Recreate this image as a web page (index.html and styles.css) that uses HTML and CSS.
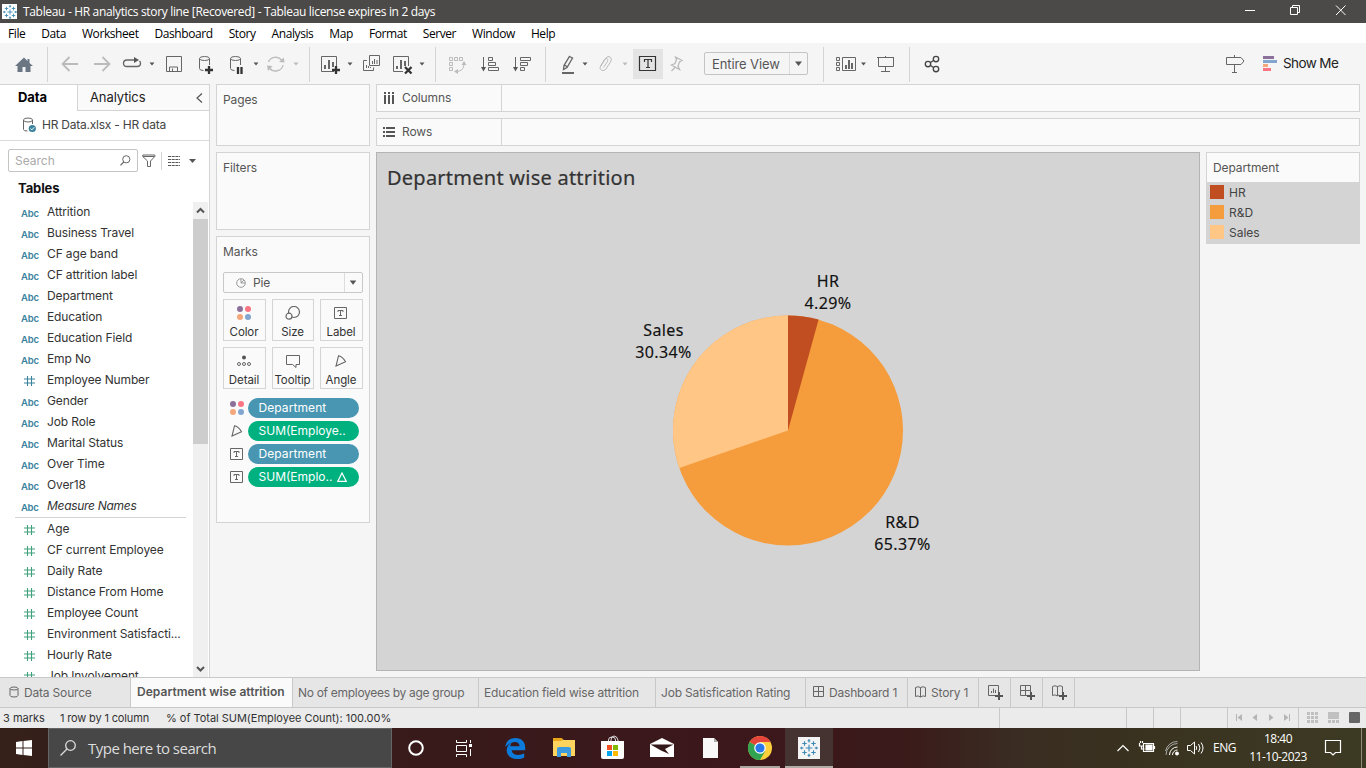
FILE: index.html
```html
<!DOCTYPE html>
<html lang="en">
<head>
<meta charset="utf-8">
<title>Tableau - HR analytics story line</title>
<link rel="stylesheet" href="styles.css">
</head>
<body>
<svg class="defs" width="0" height="0">
  <symbol id="abc" viewBox="0 0 18 14"><text x="0" y="11" class="abc-text">Abc</text></symbol>
  <symbol id="num" viewBox="0 0 18 14"><path d="M6.500 2v10M10.500 2v10M3 5h11M3 9h11" fill="none" stroke="currentColor" stroke-width="1.100"/></symbol>
  <symbol id="dots" viewBox="0 0 14 14"><circle cx="3" cy="3" r="3" fill="#8b7199"/><circle cx="11" cy="3" r="3" fill="#fa7583"/><circle cx="3" cy="11" r="3" fill="#f4a77b"/><circle cx="11" cy="11" r="3" fill="#82a6cf"/></symbol>
  <symbol id="label" viewBox="0 0 14 12"><path d="M.5.5h12v11h-12zM4 5V3.500h5V5M6.500 3.500v5M5 8.500h3" fill="none" stroke="#666"/></symbol>
  <symbol id="angle" viewBox="0 0 12 12"><path d="M3.500.8L1 11l9.500-4.200Q8 2 3.500.8z" fill="none" stroke="#666" stroke-width="1.100"/></symbol>
  <symbol id="tableau" viewBox="0 0 16 16"><path d="M8 5v6M5 8h6M8 0v3M6.800 1.500h2.400M8 13v3M6.800 14.500h2.400M0 8h3M1.500 6.800v2.400M13 8h3M14.500 6.800v2.400M4 2v4M2 4h4M12 2v4M10 4h4M4 10v4M2 12h4M12 10v4M10 12h4" fill="none" stroke="#3c8ab5"/></symbol>
</svg>

<header class="titlebar">
  <span class="app-icon"><svg width="14" height="14"><use href="#tableau"/></svg></span>
  <span class="title-text">Tableau - HR analytics story line [Recovered] - Tableau license expires in 2 days</span>
  <svg class="window-controls" width="136" height="23" viewBox="1230 0 136 23" fill="none" stroke="#fff"><path d="M1245 10.500h10M1290.500 7.500h7v7h-7zM1292.500 7V5.500h7v7H1298M1336 5.500l9.500 9.500M1345.500 5.500l-9.500 9.500"/></svg>
</header>

<nav class="menubar">
  <span>File</span><span>Data</span><span>Worksheet</span><span>Dashboard</span><span>Story</span><span>Analysis</span><span>Map</span><span>Format</span><span>Server</span><span>Window</span><span>Help</span>
</nav>

<div class="toolbar">
  <div class="tool-group">
    <svg width="47" height="40" viewBox="0 43 47 40"><path d="M15 66L24 57.500l3.500 3.500V59h2v4l3.500 3h-2.500v6h-5v-5h-3v5h-5v-6z" fill="#6b7683" stroke="none"/></svg>
  </div>
  <div class="tool-group">
    <svg class="muted" width="38" height="40" viewBox="48 43 38 40"><path class="thick" d="M78 64H63M69.500 57L62.500 64l7 7"/></svg>
    <svg class="muted" width="32" height="40" viewBox="86 43 32 40"><path class="thick" d="M94 64h15M102.500 57l7 7-7 7"/></svg>
    <svg width="42" height="40" viewBox="118 43 42 40"><path class="mid" d="M135 60h-8q-3.500 0-3.500 3.300t3.500 3.200h10q3.500 0 3.500-3.200 0-1.300-1-2.300"/><path class="fill" d="M134 57l5 3-5 3zM149.500 62.500h5l-2.500 3z"/></svg>
    <svg width="30" height="40" viewBox="160 43 30 40"><path d="M166.500 56.500h15v15h-15zM169.500 71v-4h8v4M172.500 71v-2.500"/></svg>
    <svg width="32" height="40" viewBox="190 43 32 40"><path d="M199.500 58.500v10q0 2 4 2M209.500 58.500V65M199.500 58.500q0-2 5-2t5 2-5 2-5-2"/><path class="bold" d="M209 66v8M205 70h8"/></svg>
    <svg width="40" height="40" viewBox="222 43 40 40"><path d="M230.500 58.500v10q0 2 4 2M240.500 58.500V65M230.500 58.500q0-2 5-2t5 2-5 2-5-2"/><path class="bold" d="M238 67v7M241.500 67v7"/><path class="fill" d="M253.500 62.500h5l-2.500 3z"/></svg>
    <svg class="muted" width="47" height="40" viewBox="262 43 47 40"><path class="mid" d="M268.500 62a7.500 7 0 0 1 13-2M283 65a7.500 7 0 0 1-13.500 3"/><path class="fill" d="M279 62l5.500.5-.8-5zM272.500 66l-5.500-.5 1 5.500zM293.500 62.500h5l-2.500 3z"/></svg>
  </div>
  <div class="tool-group">
    <svg width="47" height="40" viewBox="310 43 47 40"><path d="M334 71.500h-12.500v-15h15V66"/><path class="bars" d="M325 69v-4M329 69v-9M333 67v-5"/><path class="bold" d="M336 66v8M332 70h8"/><path class="fill" d="M347.500 62.500h5l-2.500 3z"/></svg>
    <svg width="30" height="40" viewBox="357 43 30 40"><path d="M369.500 55.500h10v10h-10zM367 60.500h-3.500v10h10v-3M372.500 64v-3M374.500 64v-5M377 64v-4M366.500 68v-3M368.500 68v-2M370.500 68v-1"/></svg>
    <svg width="48" height="40" viewBox="387 43 48 40"><path d="M403 71.500h-9.500v-15h15V66"/><path class="bars" d="M397 69v-3M401 69v-9M405 66v-5"/><path class="bold" d="M405 67l6.500 6.500M411.500 67l-6.500 6.500"/><path class="fill" d="M419.500 62.500h5l-2.500 3z"/></svg>
  </div>
  <div class="tool-group">
    <svg class="muted" width="37" height="40" viewBox="436 43 37 40"><path d="M449.500 57.500h3v3h-3zM454.500 57.500h3v3h-3zM459.500 57.500h3v3h-3zM449.500 62.500h3v3h-3zM449.500 67.500h3v3h-3zM464 64q0 7.500-8 7.500"/><path class="fill" d="M464 61l2.500 4h-5zM454 71.500l4-2.500v5z"/></svg>
    <svg width="33" height="40" viewBox="473 43 33 40"><path d="M483.500 57v13M488.500 57.500h4v3h-4zM488.500 62.500h7v3h-7zM488.500 67.500h10v3h-10z"/><path class="fill" d="M481 67h5l-2.500 4.500z"/></svg>
    <svg width="39" height="40" viewBox="506 43 39 40"><path d="M515.500 57v13M520.500 57.500h10v3h-10zM520.500 62.500h7v3h-7zM520.500 67.500h4v3h-4z"/><path class="fill" d="M513 67h5l-2.500 4.500z"/></svg>
  </div>
  <div class="tool-group">
    <svg width="46" height="40" viewBox="546 43 46 40"><path class="mid" d="M569.500 56.500l3 1.500-5.500 9.500-3.500 2 .5-4zM564.500 65l3 2"/><path class="bars" d="M562 73h12"/><path class="fill" d="M582.500 62.500h5l-2.500 3z"/></svg>
    <svg class="muted" width="41" height="40" viewBox="592 43 41 40"><path d="M601 66l5-8q2-2.500 4-1 2 1.500 1 4l-5 8q-2 2.500-4.500 1.200-2.500-1.700-1-4.200l4-6.500q1.200-1.700 2.500-1 1.500 1 .5 3l-4 6"/><path class="fill" d="M622.500 62.500h5l-2.500 3z"/></svg>
    <span class="pressed"><svg width="30" height="30" viewBox="633 49 30 30"><path d="M639.500 56.500h16v14h-16zM644.500 62v-2.500h7V62M648 59.500v8M646 67.500h4"/></svg></span>
    <svg class="muted" width="41" height="40" viewBox="663 43 41 40"><path class="mid" d="M675.500 57l6.500 3.500-2.500 1.500-1.500 4 1.500 3.500-8-4.500 3.500-1.500 1.500-4zM675 67.500L671.500 71"/></svg>
    <div class="combo"><span class="combo-text">Entire View</span><svg width="17" height="21" viewBox="0 0 17 21"><path class="fill" d="M5 8.500h7l-3.500 4.500z"/></svg></div>
    <span class="combo-tail"></span>
  </div>
  <div class="tool-group">
    <svg width="47" height="40" viewBox="824 43 47 40"><path d="M836.500 57.500h3v3h-3zM836.500 62.500h3v3h-3zM836.500 67.500h3v3h-3zM842.500 57.500h13v13h-13z"/><path class="bars" d="M846 69v-4M849 69v-9M852 69v-6"/><path class="fill" d="M861 62.500h5l-2.500 3z"/></svg>
    <svg width="38" height="40" viewBox="871 43 38 40"><path d="M877 57.500h17M878.500 58v8.500h15V58M885.500 56v2M885.500 67v4.500M881 71.500h9"/></svg>
  </div>
  <div class="tool-group">
    <svg class="share" width="44" height="40" viewBox="910 43 44 40"><circle cx="928" cy="64" r="2.700"/><circle cx="936" cy="59" r="2.700"/><circle cx="936" cy="69" r="2.700"/><path d="M930.500 62.500l3-2M930.500 65.500l3 2"/></svg>
  </div>
  <div class="tool-group right">
    <svg width="43" height="40" viewBox="1220 43 43 40"><path d="M1226.500 57.500h14.500l3 3.500-3 3.500h-14.500zM1234.500 55v2M1234.500 65v7M1232 72.500h5"/></svg>
    <svg width="20" height="40" viewBox="1263 43 20 40"><path d="M1263 56h11v3h-11z" fill="#8b7199" stroke="none"/><path d="M1263 60h14v3h-14z" fill="#82a6cf" stroke="none"/><path d="M1263 64h5v3h-5z" fill="#f4a77b" stroke="none"/><path d="M1263 68h8v3h-8z" fill="#fa7583" stroke="none"/></svg>
    <span class="showme">Show Me</span>
  </div>
</div>

<main class="workspace">
  <aside class="datapane">
    <div class="pane-tabs"><span class="pane-tab active">Data</span><span class="pane-tab other">Analytics<svg width="8" height="12" viewBox="0 0 8 12"><path d="M7 1.500L2 6l5 4.500" fill="none" stroke="#555" stroke-width="1.200"/></svg></span></div>
    <div class="source"><svg width="14" height="16" viewBox="0 0 14 16"><path d="M1.500 3v9.500q0 1.500 4 1.500M10.500 3v4M1.500 3q0-2 4.500-2t4.500 2T6 5 1.500 3" fill="none" stroke="#666"/><circle cx="10.300" cy="11.500" r="3.600" fill="#3b829d"/><path d="M8.500 11.500l1.400 1.400 2.300-2.600" fill="none" stroke="#fff"/></svg><span>HR Data.xlsx - HR data</span></div>
    <div class="search-row">
      <div class="search"><span>Search</span><svg width="11" height="11" viewBox="0 0 11 11"><circle cx="6.300" cy="4.300" r="3.600" fill="none" stroke="#666"/><path d="M3.700 7L.5 10.300" stroke="#666" stroke-width="1.200"/></svg></div>
      <svg width="14" height="14" viewBox="0 0 14 14"><path d="M.8 1h12v1.500L8.500 7v5.500h-3V7L.8 2.500zM1 2.500h11.500" fill="none" stroke="#666"/></svg>
      <i class="vline"></i>
      <svg class="view-icon" width="12" height="10" viewBox="0 0 12 10"><path d="M0 .5h12M0 3.500h12M0 6.500h12M0 9.500h12" stroke="#555" stroke-dasharray="3 .7"/></svg>
      <svg class="view-caret" width="7" height="4" viewBox="0 0 7 4"><path d="M0 0h7L3.500 4z" fill="#555"/></svg>
    </div>
    <h2 class="tables">Tables</h2>
    <div class="field-area">
      <div class="fields">
        <div class="field dim"><svg><use href="#abc"/></svg>Attrition</div>
        <div class="field dim"><svg><use href="#abc"/></svg>Business Travel</div>
        <div class="field dim"><svg><use href="#abc"/></svg>CF age band</div>
        <div class="field dim"><svg><use href="#abc"/></svg>CF attrition label</div>
        <div class="field dim"><svg><use href="#abc"/></svg>Department</div>
        <div class="field dim"><svg><use href="#abc"/></svg>Education</div>
        <div class="field dim"><svg><use href="#abc"/></svg>Education Field</div>
        <div class="field dim"><svg><use href="#abc"/></svg>Emp No</div>
        <div class="field dim"><svg><use href="#num"/></svg>Employee Number</div>
        <div class="field dim"><svg><use href="#abc"/></svg>Gender</div>
        <div class="field dim"><svg><use href="#abc"/></svg>Job Role</div>
        <div class="field dim"><svg><use href="#abc"/></svg>Marital Status</div>
        <div class="field dim"><svg><use href="#abc"/></svg>Over Time</div>
        <div class="field dim"><svg><use href="#abc"/></svg>Over18</div>
        <div class="field dim italic"><svg><use href="#abc"/></svg>Measure Names</div>
        <div class="split"></div>
        <div class="field mea"><svg><use href="#num"/></svg>Age</div>
        <div class="field mea"><svg><use href="#num"/></svg>CF current Employee</div>
        <div class="field mea"><svg><use href="#num"/></svg>Daily Rate</div>
        <div class="field mea"><svg><use href="#num"/></svg>Distance From Home</div>
        <div class="field mea"><svg><use href="#num"/></svg>Employee Count</div>
        <div class="field mea"><svg><use href="#num"/></svg>Environment Satisfacti...</div>
        <div class="field mea"><svg><use href="#num"/></svg>Hourly Rate</div>
        <div class="field mea"><svg><use href="#num"/></svg>Job Involvement</div>
      </div>
      <div class="scrollbar">
        <svg width="15" height="17" viewBox="0 0 15 17"><path d="M4 10.500L7.500 7l3.500 3.500" fill="none" stroke="#555" stroke-width="2"/></svg>
        <div class="thumb"></div>
        <svg width="15" height="17" viewBox="0 0 15 17"><path d="M4 7l3.500 3.500L11 7" fill="none" stroke="#555" stroke-width="2"/></svg>
      </div>
    </div>
  </aside>

  <section class="cards">
    <div class="card pages">Pages</div>
    <div class="card filters">Filters</div>
    <div class="card marks">
      <div class="marks-title">Marks</div>
      <div class="mark-type"><svg width="10" height="10" viewBox="0 0 10 10"><circle cx="5" cy="5" r="4.300" fill="none" stroke="#999"/><path d="M5 1v4h4M5 5l3-3" fill="none" stroke="#999"/></svg><span>Pie</span><svg class="mark-caret" width="18" height="19" viewBox="0 0 18 19"><path d="M5 7.500h7L8.500 12z" fill="#555"/></svg></div>
      <div class="mark-grid">
        <div class="mark-button"><svg width="14" height="14"><use href="#dots"/></svg>Color</div>
        <div class="mark-button"><svg width="16" height="14" viewBox="0 0 16 14" fill="none" stroke="#666" stroke-width="1.200"><circle cx="9" cy="6" r="5.500"/><circle cx="4" cy="10.200" r="3" fill="#fafafa"/></svg>Size</div>
        <div class="mark-button"><svg width="14" height="12"><use href="#label"/></svg>Label</div>
        <div class="mark-button"><svg width="14" height="12" viewBox="0 0 14 12" fill="none" stroke="#666"><circle cx="7" cy="2.500" r="2" fill="#555" stroke="none"/><circle cx="2" cy="9" r="1.500"/><circle cx="7" cy="9" r="1.500"/><circle cx="12" cy="9" r="1.500"/></svg>Detail</div>
        <div class="mark-button"><svg width="14" height="13" viewBox="0 0 14 13"><path d="M.5.5h13v9H10v3l-3.500-3h-6z" fill="none" stroke="#666"/></svg>Tooltip</div>
        <div class="mark-button"><svg width="12" height="12"><use href="#angle"/></svg>Angle</div>
      </div>
      <div class="pills">
        <div class="pill-row"><svg width="14" height="14"><use href="#dots"/></svg><span class="pill blue">Department</span></div>
        <div class="pill-row"><svg width="14" height="12"><use href="#angle"/></svg><span class="pill green">SUM(Employe..</span></div>
        <div class="pill-row"><svg width="14" height="12"><use href="#label"/></svg><span class="pill blue">Department</span></div>
        <div class="pill-row"><svg width="14" height="12"><use href="#label"/></svg><span class="pill green">SUM(Emplo..<svg width="10" height="10" viewBox="0 0 10 10"><path d="M5 1L.8 9.300h8.400z" fill="none" stroke="#fff" stroke-width="1.200"/></svg></span></div>
      </div>
    </div>
  </section>

  <section class="sheet">
    <div class="shelf"><span class="shelf-label"><svg width="12" height="12" viewBox="0 0 12 12"><path d="M2 0v2M2 3v9M6 0v2M6 3v9M10 0v2M10 3v9" stroke="#555" stroke-width="2"/></svg>Columns</span></div>
    <div class="shelf"><span class="shelf-label"><svg width="12" height="12" viewBox="0 0 12 12"><path d="M0 2h2M3 2h9M0 6h2M3 6h9M0 10h2M3 10h9" stroke="#555" stroke-width="2"/></svg>Rows</span></div>
    <div class="sheet-body">
      <div class="canvas">
        <h1 class="viz-title">Department wise attrition</h1>
        <svg class="pie" width="823" height="400" viewBox="377 230 823 400">
          <circle cx="788" cy="430.500" r="115" fill="#f59c3c"/>
          <path d="M788 430.500V315.500A115 115 0 0 1 818.600 319.600z" fill="#c14e20"/>
          <path d="M788 430.500L679.300 468A115 115 0 0 1 788 315.500z" fill="#ffc685"/>
          <g class="pie-labels"><text x="828" y="287">HR</text><text x="828" y="309">4.29%</text><text x="663.500" y="336">Sales</text><text x="663.500" y="358">30.34%</text><text x="902.500" y="528">R&amp;D</text><text x="902.500" y="550">65.37%</text></g>
        </svg>
      </div>
      <div class="legend">
        <div class="legend-title">Department</div>
        <ul><li><i class="sw hr"></i><span>HR</span></li><li><i class="sw rd"></i><span>R&amp;D</span></li><li><i class="sw sales"></i><span>Sales</span></li></ul>
      </div>
    </div>
  </section>
</main>

<div class="sheet-tabs">
  <div class="stab w-source"><svg width="10" height="12" viewBox="0 0 10 12"><path d="M1 2.500v7q0 1.500 4 1.500t4-1.500v-7Q9 1 5 1T1 2.500 5 4t4-1.500" fill="none" stroke="#666"/></svg>Data Source</div>
  <div class="stab current"><span>Department wise attrition</span></div>
  <div class="stab w-age">No of employees by age group</div>
  <div class="stab w-edu">Education field wise attrition</div>
  <div class="stab w-job">Job Satisfication Rating</div>
  <div class="stab w-dash"><svg width="12" height="12" viewBox="0 0 12 12"><path d="M.5.5h10v10H.5zM5.500.5v10M.5 5.500h10" fill="none" stroke="#666"/></svg>Dashboard 1</div>
  <div class="stab w-story"><svg width="12" height="12" viewBox="0 0 12 12"><path d="M.5 1.500Q3 0 5.500 1.500 8 0 10.500 1.500v9Q8 9 5.500 11 3 9 .5 10.500zM5.500 1.500V11" fill="none" stroke="#666"/></svg>Story 1</div>
  <div class="stab add"><svg width="16" height="15" viewBox="0 0 16 15"><path d="M8 10.500H.5V.5h10V8M3.500 8V6M5.500 8V3.500M7.500 8V5" fill="none" stroke="#666"/><path d="M11 7v8M7 11h8" stroke="#555" stroke-width="2"/></svg></div>
  <div class="stab add"><svg width="16" height="15" viewBox="0 0 16 15"><path d="M8 10.500H.5V.5h10V8M5.500.5v10M.5 5.500h10" fill="none" stroke="#666"/><path d="M11 7v8M7 11h8" stroke="#555" stroke-width="2"/></svg></div>
  <div class="stab add"><svg width="16" height="15" viewBox="0 0 16 15"><path d="M7 10Q6 10 5.500 11 3 9 .5 10.500v-9Q3 0 5.500 1.500 8 0 10.500 1.500V7M5.500 1.500V11" fill="none" stroke="#666"/><path d="M11 7v8M7 11h8" stroke="#555" stroke-width="2"/></svg></div>
</div>

<footer class="statusbar">
  <span class="s-marks">3 marks</span><span class="s-rows">1 row by 1 column</span><span class="s-total">% of Total SUM(Employee Count): 100.00%</span>
  <svg width="367" height="20" viewBox="999 708 367 20"><path d="M999.500 708v20M1126.500 708v20M1153.500 708v20M1180.500 708v20M1227.500 708v20M1298.500 708v20" stroke="#c8c8c8"/><path d="M1236 714h1v7h-1zM1242 714v7l-4.500-3.500zM1257 714v7l-4.500-3.500zM1269 714v7l4.500-3.500zM1284 714v7l4.500-3.500zM1289 714h1v7h-1z" fill="#b5b5b5"/><path d="M1307 712h3v3h-3zM1311 712h3v3h-3zM1315 712h3v3h-3zM1307 716h3v3h-3zM1311 716h3v3h-3zM1315 716h3v3h-3zM1307 720h3v3h-3zM1311 720h3v3h-3zM1315 720h3v3h-3zM1328 712h11v7h-11zM1328 720h3v3h-3zM1332 720h3v3h-3zM1336 720h3v3h-3z" fill="#c0c0c0"/><rect x="1349" y="712" width="11" height="11" rx="1" fill="#666"/></svg>
</footer>

<div class="taskbar">
  <svg width="48" height="40" viewBox="0 0 48 40"><path d="M16 14l6.500-1v6.500H16zM23.500 12.900L32 12v7.500h-8.500zM16 20.500h6.500V27L16 26zM23.500 20.500H32V28l-8.500-1z" fill="#fff"/></svg>
  <div class="win-search"><svg width="16" height="16" viewBox="0 0 16 16" fill="none" stroke="#ddd" stroke-width="1.300"><circle cx="10.500" cy="5.500" r="4.800"/><path d="M7 9L.5 15.500"/></svg><span>Type here to search</span></div>
  <svg width="48" height="40" viewBox="392 728 48 40"><circle cx="416" cy="748" r="6.800" fill="none" stroke="#fff" stroke-width="2"/></svg>
  <svg width="50" height="40" viewBox="440 728 50 40" fill="none" stroke="#fff"><path d="M456.500 740v2.500h10V740M456.500 745.500h10v6h-10zM456.500 757v-2.500h10v2.500M470.500 740v3M470.500 749v7"/><path d="M469 744h3v3h-3z" fill="#fff" stroke="none"/></svg>
  <svg width="50" height="40" viewBox="490 728 50 40"><path d="M505.300 747C506 741 510 738 515.500 738c6 0 9.700 4 9.700 9.500v2.800h-13.500c.2 3 3 4.700 6.300 4.700 2.400 0 4.400-.6 6.200-1.700v4.200c-2 1-4.400 1.500-7.200 1.500-6.500 0-10.300-4-10.300-8.700 0-3.500 2-6.200 5-7.800-.8 1-1.300 2.300-1.400 3.700h9.200c0-2.700-1.600-4.300-4.500-4.300-3.400 0-7 2-9.700 5.100z" fill="#0c7bdc"/></svg>
  <svg width="49" height="40" viewBox="540 728 49 40"><path d="M553 739h9l2 1h11v16h-22z" fill="#ffd45e"/><path d="M553 738h9l1 2-2 1h-8z" fill="#e9a61a"/><path d="M557 757v-8q0-2 2-2h10q2 0 2 2v8h-4v-4h-6v4z" fill="#3c9ade"/></svg>
  <svg width="49" height="40" viewBox="589 728 49 40"><path d="M608.500 742v-2q0-3 3.500-3t3.500 3v2M611 742v-2q0-4 3-4t4 4v2" fill="none" stroke="#ddd"/><path d="M601 741h23v16q0 2-2 2h-19q-2 0-2-2z" fill="#fff"/><path d="M607 745h5v5h-5z" fill="#f25022"/><path d="M613 745h5v5h-5z" fill="#7fba00"/><path d="M607 751h5v5h-5z" fill="#00a4ef"/><path d="M613 751h5v5h-5z" fill="#ffb900"/></svg>
  <svg width="49" height="40" viewBox="638 728 49 40"><path d="M650 744l12-6 12 6v13h-24z" fill="#fff"/><path d="M650.500 744.500h23L665 749l4 5-8-3.500z" fill="#35191a"/></svg>
  <svg width="49" height="40" viewBox="687 728 49 40"><path d="M703 738h11l4 4v16h-15z" fill="#f8f8f8"/><path d="M714 738l4 4h-4z" fill="#aaa"/></svg>
  <svg class="task running" width="49" height="40" viewBox="736 728 49 40"><circle cx="760" cy="748" r="12" fill="#fdd03b"/><path d="M760 748l-10.400-6A12 12 0 0 1 770.400 742H760z" fill="#e5453a"/><path d="M749.600 742A12 12 0 0 0 760 760l5.200-9L760 748z" fill="#32a350"/><circle cx="760" cy="748" r="5.800" fill="#fff"/><circle cx="760" cy="748" r="4.600" fill="#2878ec"/><path d="M740 766h40v2h-40z" fill="#aaa69f"/></svg>
  <svg class="task selected" width="48" height="40" viewBox="785 728 48 40"><path d="M785 766h48v2h-48z" fill="#b1ada6"/><path d="M798 737h22v22h-22z" fill="#f4f4f4"/><use href="#tableau" x="800" y="739" width="18" height="18"/></svg>
  <svg class="tray" width="96" height="40" viewBox="1112 728 96 40" fill="none" stroke="#fff" stroke-width="1.200"><path d="M1117.500 751l5.500-5.500 5.500 5.500"/><path d="M1143.500 743.500h10v8h-10zM1154.500 746v3M1139.500 743v3h4v-3M1140.500 741v2M1142.500 741v2M1141.500 746v3h3"/><path d="M1146 745h6v5h-6z" fill="#fff"/><path d="M1169.500 755a8 8 0 0 1 8-8M1172.500 755a5 5 0 0 1 5-5" stroke-width="1"/><path d="M1166 755a11.500 11.500 0 0 1 11.500-11.500M1165.500 751a12 12 0 0 1 12-9.500" stroke="#aaa" stroke-width="1"/><circle cx="1177" cy="753.500" r="1.300" fill="#fff"/><path d="M1187.500 745.500h3l4-3.500v12l-4-3.500h-3zM1196 746q1.500 2 0 4M1198.500 744q3 4 0 8M1201 742.500q4 5.500 0 11" stroke-width="1"/></svg>
  <span class="lang">ENG</span>
  <div class="clock"><span>18:40</span><span>11-10-2023</span></div>
  <svg class="notify" width="58" height="40" viewBox="1308 728 58 40"><path d="M1325.500 740.500h15v12h-5l-2.500 2.500-2.500-2.500h-5z" fill="none" stroke="#fff" stroke-width="1.200"/><path d="M1361.500 728v40" stroke="#8d8a7c"/></svg>
</div>
</body>
</html>
```

FILE: styles.css
```css
* { box-sizing: border-box; }
body {
  margin: 0;
  width: 1366px;
  height: 768px;
  overflow: hidden;
  display: flex;
  flex-direction: column;
  background: #f5f5f5;
  color: #333;
  font: 12px/16px Inter, "Open Sans", sans-serif;
  white-space: nowrap;
}
svg { display: block; flex: none; }
.defs { display: none; }
h1, h2, ul { margin: 0; padding: 0; }

/* Window chrome */
.titlebar {
  height: 23px;
  flex: none;
  display: flex;
  align-items: center;
  background: #4c4a48;
  color: #fff;
  font: 12px/20px "Open Sans", sans-serif;
}
.app-icon { margin-left: 2px; width: 15px; height: 15px; background: #fff; display: flex; align-items: center; justify-content: center; }
.title-text { margin-left: 6px; letter-spacing: -0.33px; }
.window-controls { margin-left: auto; }
.menubar {
  height: 20px;
  flex: none;
  display: flex;
  gap: 16px;
  padding-left: 8px;
  background: #fff;
  color: #000;
  font: 12px/21px "Open Sans", sans-serif;
  letter-spacing: -0.42px;
}

/* Toolbar */
.toolbar { height: 41px; flex: none; display: flex; padding-bottom: 1px; }
.tool-group { display: flex; align-items: center; position: relative; }
.tool-group + .tool-group:not(.right) { border-left: 1px solid #d4d4d4; height: 35px; margin-top: 4px; }
.tool-group svg { fill: none; stroke: #666; color: #555; }
.tool-group > svg { margin-top: -4px; }
.tool-group:first-child > svg, .right > svg { margin-top: 0; }
.tool-group svg.muted { stroke: #bbb; color: #bbb; }
.toolbar .fill { fill: currentColor; stroke: none; }
.toolbar .mid, .toolbar .share { stroke-width: 1.35; }
.toolbar .share { stroke: #444; }
.toolbar .thick { stroke-width: 1.8; }
.toolbar .bars { stroke-width: 2; }
.toolbar .bold { stroke: #333; stroke-width: 2.3; }
.pressed { width: 30px; height: 30px; background: #e4e4e4; margin-top: -2px; }
.tool-group .pressed svg { stroke: #333; stroke-width: 1.2; }
.combo {
  width: 104px;
  height: 23px;
  border: 1px solid #c4c4c4;
  border-radius: 2px;
  display: flex;
  align-items: center;
  justify-content: space-between;
  padding-left: 7px;
  margin-top: -2px;
  color: #555;
  font-size: 13px;
  letter-spacing: -0.1px;
}
.combo svg { border-left: 1px solid #ddd; width: 18px; }
.combo-tail { width: 15px; }
.tool-group.right { margin-left: auto; width: 146px; }
.showme { font-size: 13.5px; letter-spacing: -0.6px; color: #222; }

/* Main area */
.workspace { flex: none; height: 593px; display: flex; }
.datapane { width: 210px; flex: none; border-top: 1px solid #d4d4d4; border-right: 1px solid #d4d4d4; background: #fff; display: flex; flex-direction: column; }
.pane-tabs { display: flex; height: 26px; flex: none; font-size: 13px; line-height: 25px; color: #222; letter-spacing: -0.1px; }
.pane-tab.active { width: 77px; padding-left: 18px; font-weight: 700; color: #000; }
.pane-tab.other { flex: 1; border-left: 1px solid #d4d4d4; border-bottom: 1px solid #d4d4d4; background: #fafafa; padding: 0 6px 0 12px; display: flex; align-items: center; justify-content: space-between; }
.source { height: 30px; flex: none; border-bottom: 1px solid #d9d9d9; display: flex; align-items: center; padding: 0 0 2px 22px; gap: 6px; color: #444; letter-spacing: -0.23px; }
.search-row { height: 23px; margin: 8px 0 0 8px; flex: none; display: flex; align-items: center; }
.search { width: 130px; height: 23px; border: 1px solid #c4c4c4; border-radius: 2px; display: flex; align-items: center; justify-content: space-between; padding: 0 6px; margin-right: 4px; color: #aaa; }
.vline { width: 1px; height: 18px; background: #d4d4d4; margin: 0 6px 0 5px; }
.view-caret { margin-left: 9px; }
.tables { font-size: 13px; font-weight: 700; line-height: 20px; color: #111; margin: 6px 0 4px 18px; flex: none; letter-spacing: -0.1px; }
.field-area { flex: 1; min-height: 0; display: flex; padding-right: 1px; }
.fields { flex: 1; overflow: hidden; }
.field { height: 21px; display: flex; align-items: center; line-height: 20px; color: #333; padding-bottom: 2px; letter-spacing: -0.13px; }
.field svg { width: 18px; height: 14px; margin: 2px 8px 0 21px; }
.field.dim svg { color: #3b829d; }
.field.mea svg { color: #3fa27c; }
.abc-text { font: 600 9.500px Inter, sans-serif; fill: #3b829d; }
.italic { font-style: italic; letter-spacing: -0.3px; }
.split { height: 1px; background: #d4d4d4; margin: 0 7px 1px 15px; }
.scrollbar { width: 15px; background: #f0f0f0; display: flex; flex-direction: column; }
.thumb { height: 225px; background: #cdcdcd; margin-bottom: auto; }

.cards { width: 154px; margin-left: 6px; flex: none; display: flex; flex-direction: column; gap: 6px; }
.card { border: 1px solid #d4d4d4; background: #fafafa; padding: 7px 6px; color: #555; letter-spacing: -0.1px; }
.pages { height: 62px; }
.filters { height: 78px; }
.marks { height: 287px; }
.mark-type { height: 21px; width: 140px; margin-top: 12px; border: 1px solid #c8c8c8; border-radius: 2px; display: flex; align-items: center; padding-left: 12px; gap: 7px; }
.mark-caret { margin-left: auto; border-left: 1px solid #ddd; }
.mark-grid { display: grid; grid-template-columns: 43px 42px 43px; gap: 6px; margin-top: 6px; width: 140px; }
.mark-button { height: 42px; border: 1px solid #d4d4d4; display: grid; grid-template-rows: 26px 12px; align-items: center; justify-items: center; padding-right: 1px; font-size: 11.5px; line-height: 12px; color: #333; }
.pills { margin: 9px 0 0 7px; display: flex; flex-direction: column; gap: 3px; letter-spacing: 0; }
.pill-row { height: 20px; display: flex; align-items: center; gap: 4px; }
.pill { width: 111px; height: 20px; border-radius: 10px; padding-left: 10.5px; color: #fff; line-height: 20px; display: flex; align-items: center; gap: 5px; }
.blue { background: #4996b2; letter-spacing: 0.08px; }
.green { background: #00b180; }

.sheet { width: 984px; margin-left: 6px; display: flex; flex-direction: column; gap: 6px; }
.shelf { height: 28px; border: 1px solid #d4d4d4; background: #fafafa; display: flex; flex: none; color: #555; }
.shelf-label { width: 125px; border-right: 1px solid #d4d4d4; display: flex; align-items: center; gap: 7px; padding-left: 6px; letter-spacing: -0.1px; }
.sheet-body { display: flex; gap: 6px; align-items: flex-start; }
.canvas { width: 824px; height: 519px; background: #d4d4d4; border: 1px solid #b4b4b4; overflow: hidden; }
.viz-title { font: 20px/24px "Noto Sans", sans-serif; color: #333; margin: 13px 0 40px 10px; letter-spacing: 0.24px; -webkit-text-stroke: 0.2px #333; }
.pie-labels { font: 16px "Noto Sans", sans-serif; fill: #111; text-anchor: middle; letter-spacing: 0.4px; stroke: #111; stroke-width: 0.15px; }
.legend { width: 154px; height: 92px; border: 1px solid #d4d4d4; background: #d4d4d4; color: #444; }
.legend-title { background: #fafafa; height: 29px; line-height: 29px; padding-left: 6px; color: #555; letter-spacing: -0.1px; }
.legend ul { list-style: none; }
.legend li { height: 20px; display: flex; align-items: center; gap: 5px; padding-left: 3px; }
.legend li span { padding-top: 2px; }
.sw { width: 14px; height: 14px; }
.hr { background: #c14e20; }
.rd { background: #f59c3c; }
.sales { background: #ffc685; }

/* Sheet tabs and status */
.sheet-tabs { height: 31px; flex: none; display: flex; background: #e6e6e6; border-top: 1px solid #c8c8c8; border-bottom: 1px solid #c8c8c8; color: #666; letter-spacing: -0.18px; }
.stab { border-right: 1px solid #c8c8c8; padding-left: 5px; display: flex; align-items: center; gap: 5px; }
.stab svg { margin-bottom: 2px; }
.w-source { width: 131px; padding-left: 9px; }
.stab.current { width: 162px; padding-left: 6px; background: #fafafa; font-weight: 600; color: #555; letter-spacing: 0.03px; }
.stab.current span { padding-bottom: 2px; }
.w-age { width: 186px; letter-spacing: -0.3px; }
.w-edu { width: 177px; }
.w-job { width: 150px; }
.w-dash { width: 102px; padding-left: 7px; gap: 4px; }
.w-story { width: 71px; padding-left: 7px; gap: 4px; }
.add { width: 32px; padding-left: 9px; }
.add svg { margin-bottom: 0; }
.statusbar { height: 20px; flex: none; display: flex; background: #ebebeb; font-size: 11px; line-height: 20px; color: #333; padding-left: 3px; }
.s-marks { width: 57px; }
.s-rows { width: 106px; letter-spacing: -0.15px; }
.s-total { letter-spacing: -0.03px; }
.statusbar svg { margin-left: auto; }

/* Windows taskbar */
.taskbar { height: 40px; flex: none; display: flex; background: linear-gradient(90deg, #35201a 0, #381a1a 31%, #3c171c 55%, #3a1a1a 66%, #3a2c22 74%, #39331f 85%, #3d3a24 100%); color: #fff; font: 12px/18px "Open Sans", sans-serif; }
.win-search { width: 344px; border: 1px solid #666; background: #474747; display: flex; align-items: center; gap: 12px; padding-left: 11px; color: #ddd; font-size: 15px; letter-spacing: -0.52px; }
.selected { background: #453332; }
.tray { margin-left: auto; }
.lang { width: 34px; padding-left: 5px; line-height: 40px; letter-spacing: -0.5px; }
.clock { width: 66px; display: flex; flex-direction: column; align-items: center; padding: 2px 0 0 6px; letter-spacing: -0.5px; }
```
